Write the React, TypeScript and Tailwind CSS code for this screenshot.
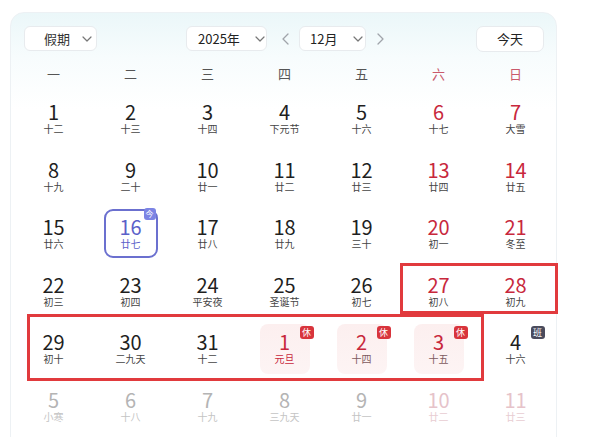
import React from "react";

type Day = {
  n: number;
  l: string;
  red?: boolean;
  today?: boolean;
  hol?: boolean;
  work?: boolean;
  dim?: boolean;
  festRed?: boolean;
};

const rows: Day[][] = [
  [
    { n: 1, l: "十二" },
    { n: 2, l: "十三" },
    { n: 3, l: "十四" },
    { n: 4, l: "下元节" },
    { n: 5, l: "十六" },
    { n: 6, l: "十七", red: true },
    { n: 7, l: "大雪", red: true },
  ],
  [
    { n: 8, l: "十九" },
    { n: 9, l: "二十" },
    { n: 10, l: "廿一" },
    { n: 11, l: "廿二" },
    { n: 12, l: "廿三" },
    { n: 13, l: "廿四", red: true },
    { n: 14, l: "廿五", red: true },
  ],
  [
    { n: 15, l: "廿六" },
    { n: 16, l: "廿七", today: true },
    { n: 17, l: "廿八" },
    { n: 18, l: "廿九" },
    { n: 19, l: "三十" },
    { n: 20, l: "初一", red: true },
    { n: 21, l: "冬至", red: true },
  ],
  [
    { n: 22, l: "初三" },
    { n: 23, l: "初四" },
    { n: 24, l: "平安夜" },
    { n: 25, l: "圣诞节" },
    { n: 26, l: "初七" },
    { n: 27, l: "初八", red: true },
    { n: 28, l: "初九", red: true },
  ],
  [
    { n: 29, l: "初十" },
    { n: 30, l: "二九天" },
    { n: 31, l: "十二" },
    { n: 1, l: "元旦", red: true, hol: true, festRed: true },
    { n: 2, l: "十四", red: true, hol: true },
    { n: 3, l: "十五", red: true, hol: true },
    { n: 4, l: "十六", work: true },
  ],
  [
    { n: 5, l: "小寒", dim: true },
    { n: 6, l: "十八", dim: true },
    { n: 7, l: "十九", dim: true },
    { n: 8, l: "三九天", dim: true },
    { n: 9, l: "廿一", dim: true },
    { n: 10, l: "廿二", dim: true, red: true },
    { n: 11, l: "廿三", dim: true, red: true },
  ],
];

const weekdays = ["一", "二", "三", "四", "五", "六", "日"];

function ChevronDown() {
  return (
    <svg width="10" height="6" viewBox="0 0 10 6" fill="none">
      <path d="M1 1l4 4 4-4" stroke="#777" strokeWidth="1.2" strokeLinecap="round" strokeLinejoin="round" />
    </svg>
  );
}

function ChevronSide({ dir }: { dir: "l" | "r" }) {
  return (
    <svg width="7" height="12" viewBox="0 0 7 12" fill="none">
      <path
        d={dir === "l" ? "M6 1L1 6l5 5" : "M1 1l5 5-5 5"}
        stroke="#a0a4aa"
        strokeWidth="1.3"
        strokeLinecap="round"
        strokeLinejoin="round"
      />
    </svg>
  );
}

function Cell({ d }: { d: Day }) {
  let numColor = "text-[#1f1f1f]";
  let lunColor = "text-[#444444]";
  if (d.red) numColor = "text-[#c8283c]";
  if (d.festRed) lunColor = "text-[#c8283c]";
  else if (d.hol) lunColor = "text-[#7d5a5e]";
  if (d.today) {
    numColor = "text-[#5b60c9]";
    lunColor = "text-[#5b60c9]";
  }
  if (d.dim) {
    numColor = d.red ? "text-[#e6c3ca]" : "text-[#b4b4b4]";
    lunColor = d.red ? "text-[#e8cdd2]" : "text-[#c4c4c4]";
  }
  const box = d.today
    ? "w-[54px] h-[49px] border-2 border-[#6b70cf] rounded-[9px]"
    : d.hol
    ? "w-[50px] h-[50px] rounded-[8px] bg-[linear-gradient(180deg,#fcefef_0%,#fdf4f4_100%)]"
    : "w-[50px] h-[50px]";
  return (
    <div className="h-[57.5px] flex items-center justify-center">
      <div className={`relative flex flex-col items-center justify-center ${box}`}>
        <div className={`text-[20px] leading-[20px] ${numColor}`}>{d.n}</div>
        <div className={`text-[10px] leading-[13px] ${lunColor}`}>{d.l}</div>
        {d.today && (
          <div className="absolute -top-[3px] right-[0px] w-[12px] h-[12px] rounded-[3px] bg-[#7c84e4] text-white text-[8px] leading-[12px] text-center">
            今
          </div>
        )}
        {d.hol && (
          <div className="absolute top-[2px] -right-[4px] w-[14px] h-[13px] rounded-[3px] bg-[#d8343c] text-white text-[9px] leading-[13px] text-center">
            休
          </div>
        )}
        {d.work && (
          <div className="absolute top-[2px] -right-[4px] w-[14px] h-[13px] rounded-[3px] bg-[#4a4b5c] text-white text-[9px] leading-[13px] text-center">
            班
          </div>
        )}
      </div>
    </div>
  );
}

export default function App() {
  return (
    <div
      className="w-[600px] h-[437px] bg-white overflow-hidden"
      style={{ fontFamily: '"Noto Sans CJK SC", "Noto Sans", sans-serif' }}
    >
      <div className="relative ml-[10px] mt-[12px] w-[547px] h-[440px] rounded-t-[14px] border border-[#edf1f4] bg-[linear-gradient(180deg,#ebf7f9_0%,#f7fcfd_10%,#ffffff_22%)]">
        {/* header */}
        <div className="flex items-center pt-[13px] h-[25px] box-content pr-[12px]">
          <div className="ml-[13px] w-[73px] h-[25px] flex items-center pl-[19px] bg-white border border-[#e8ebee] rounded-[6px] text-[13px] text-[#333]">
            <span>假期</span>
            <span className="ml-[12px] flex"><ChevronDown /></span>
          </div>
          <div className="ml-[89px] w-[81px] h-[25px] flex items-center pl-[11px] bg-white border border-[#e8ebee] rounded-[6px] text-[13px] text-[#222]">
            <span>2025年</span>
            <span className="ml-[15px] flex"><ChevronDown /></span>
          </div>
          <div className="ml-[15px] flex"><ChevronSide dir="l" /></div>
          <div className="ml-[10px] w-[67px] h-[25px] flex items-center pl-[10px] bg-white border border-[#e8ebee] rounded-[6px] text-[13px] text-[#222]">
            <span>12月</span>
            <span className="ml-[16px] flex"><ChevronDown /></span>
          </div>
          <div className="ml-[11px] flex"><ChevronSide dir="r" /></div>
          <div className="ml-auto w-[68px] h-[26px] flex items-center justify-center bg-white border border-[#e8ebee] rounded-[7px] text-[13px] text-[#222]">
            今天
          </div>
        </div>
        {/* weekdays */}
        <div className="grid grid-cols-[repeat(7,77px)] pl-[4px] mt-[10px] h-[26px] items-center">
          {weekdays.map((w, i) => (
            <div
              key={w}
              className={`text-center text-[13px] ${i >= 5 ? "text-[#c9596b]" : "text-[#555]"}`}
            >
              {w}
            </div>
          ))}
        </div>
        {/* days */}
        <div className="grid grid-cols-[repeat(7,77px)] pl-[4px] mt-[2.75px]">
          {rows.flat().map((d, i) => (
            <Cell key={i} d={d} />
          ))}
        </div>
        {/* annotation boxes */}
        <div className="absolute left-[389px] top-[250px] w-[158px] h-[51px] border-[3px] border-[#e13a3d]" />
        <div className="absolute left-[16px] top-[301px] w-[457px] h-[67px] border-[3px] border-[#e13a3d]" />
      </div>
    </div>
  );
}
